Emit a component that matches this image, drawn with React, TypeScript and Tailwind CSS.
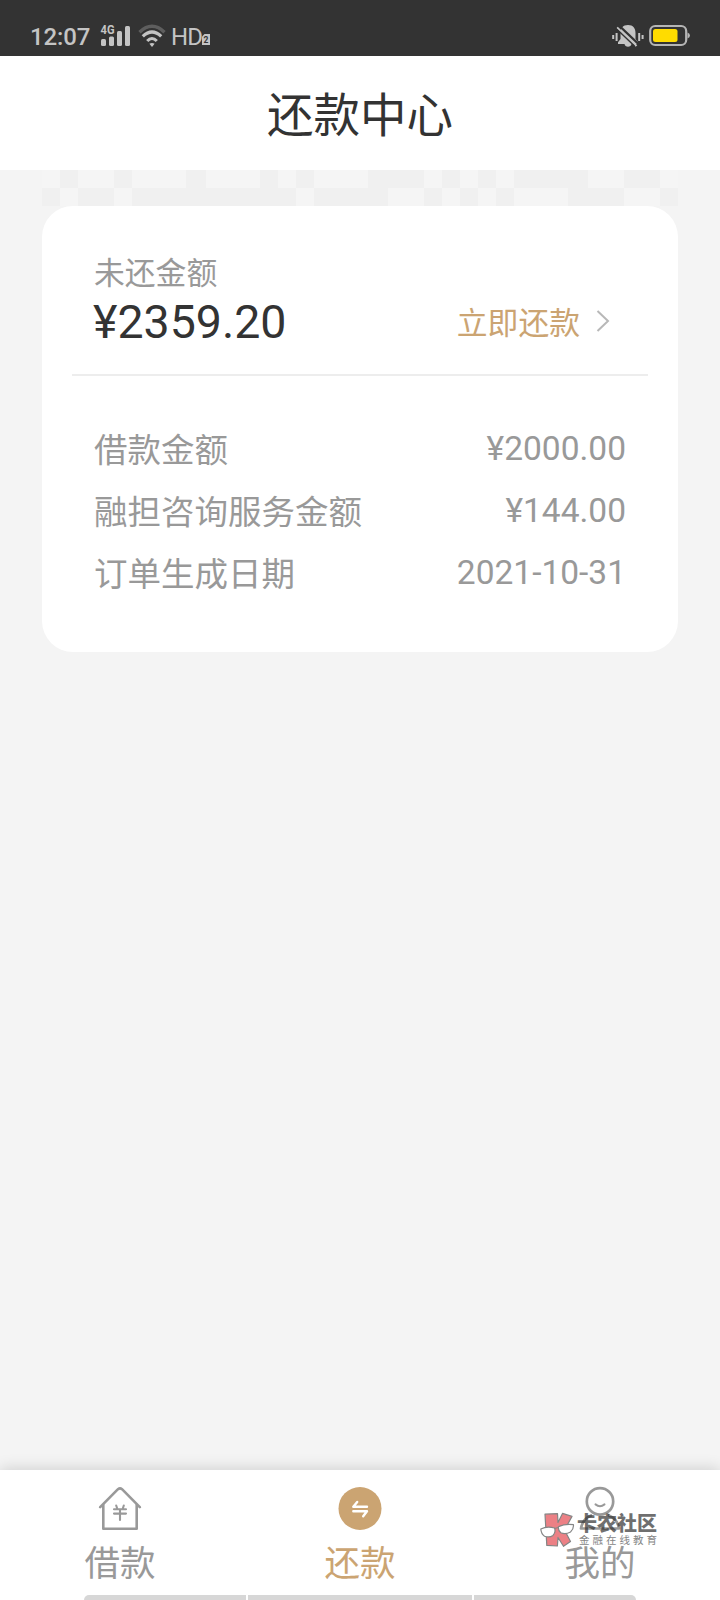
import { ReactNode } from 'react'

interface LoanRow {
  label: string
  value: string
}

interface TabProps {
  label: string
  icon: ReactNode
  active?: boolean
}

interface Segment {
  width: number
  shaded: boolean
}

const rows: LoanRow[] = [
  { label: '借款金额', value: '¥2000.00' },
  { label: '融担咨询服务金额', value: '¥144.00' },
  { label: '订单生成日期', value: '2021-10-31' },
]

// widths alternate between plain and shaded blocks
const toSegments = (widths: number[], startShaded: boolean): Segment[] =>
  widths.map((width, i) => ({ width, shaded: (i % 2 === 0) === startShaded }))

const mosaic: Segment[][] = [
  toSegments(
    [18, 18, 36, 18, 54, 20, 54, 18, 18, 18, 54, 56, 18, 18, 18, 18, 18, 74, 36, 36, 18],
    false
  ),
  toSegments(
    [18, 18, 36, 18, 164, 18, 74, 36, 18, 18, 18, 18, 18, 54, 56, 36, 18],
    true
  ),
]

function StatusBar() {
  return (
    <header className="flex h-14 shrink-0 items-start justify-between bg-[#333] pl-[30px] pr-[30px] pt-6 text-[#c4c4c4]">
      <div className="flex items-start">
        <span className="mt-px w-[63px] text-[24px] font-medium leading-6 tracking-[-0.1px]">
          12:07
        </span>
        <svg width="31" height="24" viewBox="0 0 31 24" className="ml-[7px]" fill="currentColor">
          <text x="0.5" y="10.2" fontSize="12" fontWeight="700" textLength="14" lengthAdjust="spacingAndGlyphs">
            4G
          </text>
          <rect x="1" y="15" width="5" height="7" rx="1.5" />
          <rect x="9" y="12.5" width="5" height="9.5" rx="1.5" />
          <rect x="17" y="7" width="5" height="15" rx="1.5" />
          <rect x="25" y="2" width="5" height="20" rx="1.5" />
        </svg>
        <svg width="28" height="24" viewBox="0 0 28 24" className="ml-[7px]" fill="none" stroke="currentColor">
          <path d="M1.5 8.2Q14 -3.6 26.5 8.2" strokeWidth="3.4" opacity="0.3" />
          <path d="M4.8 12.4Q14 3.8 23.2 12.4" strokeWidth="3.3" />
          <path d="M9.2 17Q14 12 18.8 17" strokeWidth="3.1" />
          <path d="M11.4 19.8Q14 18.2 16.6 19.8L14 23Z" fill="currentColor" stroke="none" />
        </svg>
        <span className="ml-[5px] mt-px text-[24px] leading-6 tracking-[-0.8px]">HD</span>
        <svg width="8" height="11" viewBox="0 0 8 11" className="mt-[10px]">
          <path d="M2.5 0H8V11H0V2.5Z" fill="#c4c4c4" />
          <text x="1.6" y="8.8" fontSize="8.5" fontWeight="700" fill="#333">
            2
          </text>
        </svg>
      </div>
      <div className="flex items-start">
        <svg width="32" height="24" viewBox="0 0 32 24" fill="none" stroke="currentColor">
          <path
            d="M16 1C10.8 1 8.5 4.5 8.5 9V15L6 18.2V20H12.5A3.6 3.6 0 0 0 19.5 20H26V18.2L23.5 15V9C23.5 4.5 21.2 1 16 1Z"
            fill="currentColor"
            stroke="none"
          />
          <path d="M7 1.5L27.5 21" stroke="#333" strokeWidth="2.4" />
          <path d="M5 3.5L24.5 22" strokeWidth="2.2" />
          <path d="M3.5 4L22.5 22" stroke="#333" strokeWidth="1.4" />
          <path d="M1.2 11V15M4.6 9V17M27.2 9V17M30.6 11V15" strokeWidth="2" />
        </svg>
        <svg width="41" height="24" viewBox="0 0 41 24" className="ml-[5px]" fill="none">
          <rect x="1.2" y="2" width="36" height="19" rx="5" stroke="#b5b5b5" strokeWidth="2.2" />
          <rect x="4" y="5" width="24.5" height="13" rx="2.5" fill="#ffdc00" />
          <path d="M38.5 8.5Q41 9.5 41 11.5T38.5 14.5Z" fill="#b5b5b5" />
        </svg>
      </div>
    </header>
  )
}

function Tab({ label, icon, active }: TabProps) {
  return (
    <button
      className={`flex flex-1 flex-col items-center pt-4 ${
        active ? 'text-[#cba472]' : 'text-[#999]'
      }`}
    >
      {icon}
      <span className="mt-[7px] text-[35.5px] leading-[52px]">{label}</span>
    </button>
  )
}

function HouseIcon() {
  return (
    <svg width="44" height="45" viewBox="0 0 44 45" fill="none" stroke="currentColor" strokeWidth="2.6" strokeLinecap="round" strokeLinejoin="round">
      <path d="M2.2 21.2L20 3.2Q22 1.4 24 3.2L41.8 21.2" />
      <path d="M5.3 19V42.7H38.7V19" />
      <path d="M18.2 19.5L19.2 22.5M25.8 19.5L24.8 22.5M16 23.2H28M16 27.6H28M22 23.2V34" strokeWidth="2.1" />
    </svg>
  )
}

function RepayIcon() {
  return (
    <svg width="44" height="45" viewBox="0 0 44 45" fill="none" stroke="#fff" strokeWidth="2.4" strokeLinecap="round" strokeLinejoin="round">
      <circle cx="22" cy="22.5" r="21.5" fill="#cba472" stroke="none" />
      <path d="M29 20.7H15.3L19.2 15.9" />
      <path d="M15.3 25.2H29L25.2 30.2" />
    </svg>
  )
}

function UserIcon() {
  return (
    <svg width="44" height="45" viewBox="0 0 44 45" fill="none" stroke="currentColor" strokeWidth="2.7" strokeLinecap="round" strokeLinejoin="round">
      <circle cx="22" cy="15.4" r="13.2" />
      <path d="M17.5 18.4Q22 22 26.5 18.4" strokeWidth="2" />
      <path d="M13 29.5Q4.5 33 3 42.5H41Q39.5 33 31 29.5" />
    </svg>
  )
}

function Watermark() {
  return (
    <div className="pointer-events-none absolute left-[540px] top-[42px] flex">
      <svg width="35" height="36" viewBox="0 0 35 36" stroke="#858585" strokeWidth="1.2" strokeLinejoin="round">
        <path
          d="M5 2.2L17.5 1.6L18 10.5L22.5 1.4L32 4.4L24.5 18L30.5 29.5L23.5 34.3L18 25.5L17.4 34L6.8 33.4Z"
          fill="#ec8085"
        />
        <path d="M0.8 17Q7 13.8 14.6 16Q16 20 13 23.4Q9.5 26 4.5 24.2Q1.2 22 0.8 17Z" fill="#fff" />
        <path d="M18.4 14.8Q25 11.4 33.4 12.6Q34 17 30.5 20Q25.5 22.8 20.8 20.8Q18 18.4 18.4 14.8Z" fill="#fff" />
        <path d="M14.6 16.5L18.4 15.5" fill="none" />
      </svg>
      <div className="ml-[2px] flex flex-col">
        <span className="text-[20px] font-black leading-[24px] text-[#333] opacity-70">
          卡农社区
        </span>
        <span className="-mt-px ml-[2px] text-[10.5px] leading-[11px] tracking-[3px] text-[#858585]">
          金融在线教育
        </span>
      </div>
    </div>
  )
}

export default function App() {
  return (
    <div className="flex h-[1600px] w-[720px] flex-col overflow-hidden bg-[#f4f4f4] font-[Roboto,'Noto_Sans_CJK_SC',sans-serif]">
      <StatusBar />

      <div className="flex h-[114px] shrink-0 items-center justify-center bg-white pt-[5px]">
        <h1 className="text-[46.5px] leading-[60px] text-[#333]">还款中心</h1>
      </div>

      <main className="flex-1 px-[42px]">
        {mosaic.map((line, i) => (
          <div key={i} className="flex h-[18px]">
            {line.map((segment, j) => (
              <div
                key={j}
                className={segment.shaded ? 'bg-[#f0f0f0]' : 'bg-[#f5f5f5]'}
                style={{ width: segment.width }}
              />
            ))}
          </div>
        ))}

        <section className="h-[446px] rounded-[31px] bg-white px-[30px] pt-[46px]">
          <div className="flex h-[124px] items-start justify-between border-b-2 border-[#ededed] px-[22px]">
            <div className="flex flex-col">
              <span className="text-[30.8px] leading-[44px] text-[#999]">
                未还金额
              </span>
              <span className="-ml-px -mt-[2px] text-[46.5px] leading-[56px] text-[#333]">
                ¥2359.20
              </span>
            </div>
            <button className="mr-[16px] mt-[50px] flex items-center text-[30.8px] leading-[44px] text-[#cba472]">
              立即还款
              <svg width="14" height="22" viewBox="0 0 14 22" className="-mt-[6px] ml-[16px]" fill="none" stroke="#b8b8b8" strokeWidth="2">
                <path d="M1.5 1L12 11L1.5 21" />
              </svg>
            </button>
          </div>

          <div className="px-[22px] pt-[44px]">
            {rows.map((row) => (
              <div
                key={row.label}
                className="flex h-[62px] items-start justify-between text-[33.5px] leading-[60px] text-[#999]"
              >
                <span className="pt-px">{row.label}</span>
                <span className="-mt-px">{row.value}</span>
              </div>
            ))}
          </div>
        </section>
      </main>

      <nav className="relative h-[130px] shrink-0 bg-white shadow-[0_-2px_14px_rgba(0,0,0,0.14)]">
        <div className="flex h-[125px]">
          <Tab label="借款" icon={<HouseIcon />} />
          <Tab label="还款" icon={<RepayIcon />} active />
          <Tab label="我的" icon={<UserIcon />} />
        </div>
        <div className="flex h-[5px] justify-center gap-[2px]">
          <div className="w-[162px] rounded-tl-full bg-[#d7d7d7]" />
          <div className="w-[224px] bg-[#d7d7d7]" />
          <div className="w-[162px] rounded-tr-full bg-[#d7d7d7]" />
        </div>
        <Watermark />
      </nav>
    </div>
  )
}
